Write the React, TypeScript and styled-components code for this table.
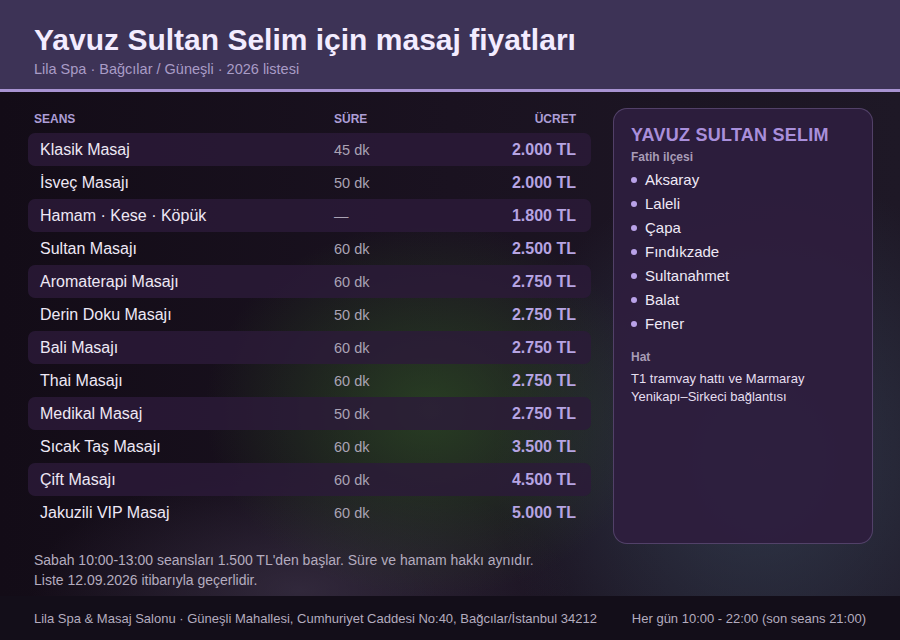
import React from "react";
import styled, { createGlobalStyle } from "styled-components";

const Global = createGlobalStyle`
  html, body { margin: 0; padding: 0; background: #140f1a; }
  * { box-sizing: border-box; }
`;

const Page = styled.div`
  width: 900px;
  height: 640px;
  display: flex;
  flex-direction: column;
  font-family: "Liberation Sans", Arial, sans-serif;
  color: #ece6f4;
  background:
    radial-gradient(ellipse 300px 250px at 430px 410px, rgba(46, 80, 36, 0.7), transparent 75%),
    radial-gradient(ellipse 340px 380px at 760px 460px, rgba(56, 70, 90, 0.7), transparent 78%),
    radial-gradient(ellipse 360px 160px at 300px 590px, rgba(70, 60, 84, 0.55), transparent 75%),
    linear-gradient(90deg, #130c17 0%, #1a1220 50%, #1e1826 100%);
  overflow: hidden;
`;

const Header = styled.header`
  height: 92px;
  padding: 23px 34px 0;
  background: #3d3356;
  border-bottom: 3px solid #a893d2;
`;

const Title = styled.h1`
  margin: 0;
  font-size: 30px;
  line-height: 34px;
  font-weight: 700;
  color: #f3ecff;
`;

const Subtitle = styled.div`
  margin-top: 2px;
  font-size: 14.5px;
  line-height: 20px;
  color: #a99cc6;
`;

const Main = styled.main`
  flex: 1;
  display: flex;
  gap: 22px;
  padding: 16px 27px 0 28px;
`;

const LeftCol = styled.section`
  width: 563px;
  padding-top: 3px;
  display: flex;
  flex-direction: column;
`;

const HeadRow = styled.div`
  display: grid;
  grid-template-columns: 300px 1fr auto;
  align-items: center;
  height: 16px;
  padding: 0 15px 0 6px;
  margin-bottom: 6px;
  font-size: 12px;
  font-weight: 700;
  color: #ad9ed6;
  text-transform: uppercase;
`;

const Row = styled.div<{ $striped: boolean }>`
  display: grid;
  grid-template-columns: 294px 1fr auto;
  align-items: center;
  height: 33px;
  padding: 0 15px 0 12px;
  border-radius: 7px;
  background: ${(p) => (p.$striped ? "rgba(44, 26, 58, 0.8)" : "transparent")};
`;

const Name = styled.span`
  font-size: 16px;
  color: #eee8f5;
`;

const Duration = styled.span`
  font-size: 14.5px;
  color: #aaa3b4;
`;

const Price = styled.span`
  font-size: 16px;
  font-weight: 700;
  color: #b6a4e2;
  text-align: right;
`;

const Notes = styled.div`
  margin-top: 21px;
  font-size: 14px;
  line-height: 20px;
  color: #b4acbf;
  padding-left: 6px;
`;

const Card = styled.aside`
  width: 260px;
  height: 436px;
  border-radius: 14px;
  border: 1px solid rgba(170, 150, 210, 0.3);
  background: rgba(46, 30, 62, 0.94);
  padding: 15px 17px;
`;

const CardTitle = styled.div`
  font-size: 18px;
  line-height: 22px;
  font-weight: 700;
  letter-spacing: 0.25px;
  color: #a98fdb;
`;

const Label = styled.div<{ $gap: number }>`
  margin-top: ${(p) => p.$gap}px;
  font-size: 12px;
  line-height: 16px;
  font-weight: 700;
  color: #a89cb6;
`;

const List = styled.ul`
  list-style: none;
  margin: 2px 0 0;
  padding: 0;
`;

const Item = styled.li`
  display: flex;
  align-items: center;
  gap: 8px;
  height: 24px;
  font-size: 15px;
  color: #efe9f6;
  &::before {
    content: "";
    width: 6px;
    height: 6px;
    border-radius: 50%;
    background: #b9a2e8;
    margin-top: 2px;
  }
`;

const CardText = styled.div`
  margin-top: 5px;
  font-size: 13px;
  line-height: 18px;
  color: #e6dff0;
`;

const Footer = styled.footer`
  height: 44px;
  flex-shrink: 0;
  display: flex;
  align-items: center;
  justify-content: space-between;
  padding: 0 34px;
  background: #130e19;
  font-size: 13px;
  color: #b3acbf;
`;

const rows: [string, string, string][] = [
  ["Klasik Masaj", "45 dk", "2.000 TL"],
  ["İsveç Masajı", "50 dk", "2.000 TL"],
  ["Hamam · Kese · Köpük", "—", "1.800 TL"],
  ["Sultan Masajı", "60 dk", "2.500 TL"],
  ["Aromaterapi Masajı", "60 dk", "2.750 TL"],
  ["Derin Doku Masajı", "50 dk", "2.750 TL"],
  ["Bali Masajı", "60 dk", "2.750 TL"],
  ["Thai Masajı", "60 dk", "2.750 TL"],
  ["Medikal Masaj", "50 dk", "2.750 TL"],
  ["Sıcak Taş Masajı", "60 dk", "3.500 TL"],
  ["Çift Masajı", "60 dk", "4.500 TL"],
  ["Jakuzili VIP Masaj", "60 dk", "5.000 TL"],
];

const places = ["Aksaray", "Laleli", "Çapa", "Fındıkzade", "Sultanahmet", "Balat", "Fener"];

export default function App() {
  return (
    <Page>
      <Global />
      <Header>
        <Title>Yavuz Sultan Selim için masaj fiyatları</Title>
        <Subtitle>Lila Spa · Bağcılar / Güneşli · 2026 listesi</Subtitle>
      </Header>
      <Main>
        <LeftCol>
          <HeadRow>
            <span>Seans</span>
            <span>Süre</span>
            <span>Ücret</span>
          </HeadRow>
          {rows.map(([n, d, p], i) => (
            <Row key={n} $striped={i % 2 === 0}>
              <Name>{n}</Name>
              <Duration>{d}</Duration>
              <Price>{p}</Price>
            </Row>
          ))}
          <Notes>
            Sabah 10:00-13:00 seansları 1.500 TL'den başlar. Süre ve hamam hakkı aynıdır.
            <br />
            Liste 12.09.2026 itibarıyla geçerlidir.
          </Notes>
        </LeftCol>
        <Card>
          <CardTitle>YAVUZ SULTAN SELIM</CardTitle>
          <Label $gap={3}>Fatih ilçesi</Label>
          <List>
            {places.map((p) => (
              <Item key={p}>{p}</Item>
            ))}
          </List>
          <Label $gap={14}>Hat</Label>
          <CardText>
            T1 tramvay hattı ve Marmaray
            <br />
            Yenikapı–Sirkeci bağlantısı
          </CardText>
        </Card>
      </Main>
      <Footer>
        <span>Lila Spa &amp; Masaj Salonu · Güneşli Mahallesi, Cumhuriyet Caddesi No:40, Bağcılar/İstanbul 34212</span>
        <span>Her gün 10:00 - 22:00 (son seans 21:00)</span>
      </Footer>
    </Page>
  );
}
